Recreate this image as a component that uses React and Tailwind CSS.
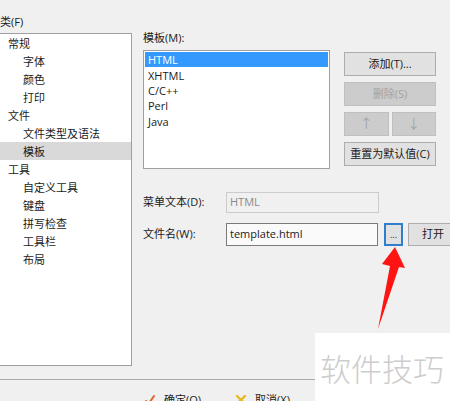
import React from "react";

const tree = [
  { label: "常规", level: 0 },
  { label: "字体", level: 1 },
  { label: "颜色", level: 1 },
  { label: "打印", level: 1 },
  { label: "文件", level: 0 },
  { label: "文件类型及语法", level: 1 },
  { label: "模板", level: 1, selected: true },
  { label: "工具", level: 0 },
  { label: "自定义工具", level: 1 },
  { label: "键盘", level: 1 },
  { label: "拼写检查", level: 1 },
  { label: "工具栏", level: 1 },
  { label: "布局", level: 1 },
];

const templates = ["HTML", "XHTML", "C/C++", "Perl", "Java"];

function Btn({ children, disabled, className = "" }) {
  return (
    <div
      className={
        "flex items-center justify-center border " +
        (disabled
          ? "bg-[#cccccc] border-[#bfbfbf] text-[#a3a3a3] "
          : "bg-[#e1e1e1] border-[#adadad] text-[#1a1a1a] ") +
        className
      }
    >
      {children}
    </div>
  );
}

export default function App() {
  return (
    <div className="relative w-[450px] h-[401px] overflow-hidden bg-[#f0f0f0] text-[11px] text-[#1a1a1a] font-['Open_Sans','Noto_Sans_CJK_SC',sans-serif]">
      {/* category caption */}
      <div className="h-[33px] pt-[14px] leading-[16px]">类(F)</div>

      <div className="flex h-[333px]">
        {/* category tree */}
        <div className="w-[132px] shrink-0 h-full bg-white border border-l-0 border-[#a0a0a0]">
          {tree.map((t) => (
            <div
              key={t.label}
              className={
                "h-[18px] flex items-center leading-none " +
                (t.level ? "pl-[23px] " : "pl-[8px] ") +
                (t.selected ? "bg-[#d9d9d9]" : "")
              }
            >
              {t.label}
            </div>
          ))}
        </div>

        {/* template settings */}
        <div className="ml-[11px] flex-1 min-w-0 flex flex-col">
          <div className="h-[17px] leading-[10px]">模板(M):</div>
          <div className="flex">
            <div className="w-[187px] shrink-0 h-[119px] bg-white border border-[#a0a0a0] p-px">
              {templates.map((t, i) => (
                <div
                  key={t}
                  className={
                    "h-[15.4px] flex items-center pl-[3px] leading-none " +
                    (i === 0 ? "bg-[#3399ff] text-white" : "")
                  }
                >
                  {t}
                </div>
              ))}
            </div>
            <div className="ml-[14px] mt-[2px] w-[92px] shrink-0 flex flex-col gap-[6px]">
              <Btn className="h-[24px]">添加(T)...</Btn>
              <Btn disabled className="h-[24px]">删除(S)</Btn>
              <div className="flex gap-[3px] h-[24px]">
                <Btn disabled className="flex-1 text-[13px]">↑</Btn>
                <Btn disabled className="flex-1 text-[13px]">↓</Btn>
              </div>
              <Btn className="h-[24px]">重置为默认值(C)</Btn>
            </div>
          </div>

          <div className="flex items-center mt-[23px]">
            <div className="w-[83px] shrink-0">菜单文本(D):</div>
            <div className="w-[153px] shrink-0 h-[21px] flex items-center pl-[3px] border border-[#cccccc] text-[#8a8a8a]">
              HTML
            </div>
          </div>

          <div className="flex items-center mt-[10px]">
            <div className="w-[83px] shrink-0">文件名(W):</div>
            <div className="w-[152px] shrink-0 h-[23px] flex items-center pl-[3px] bg-[#fafafa] border border-[#7a7a7a]">
              template.html
            </div>
            <div className="ml-[6px] w-[19px] shrink-0 h-[23px] flex items-center justify-center bg-[#e1e1e1] border-2 border-[#2f7fcf] text-[9px] leading-none">
              ...
            </div>
            <Btn className="ml-[5px] w-[50px] h-[23px] shrink-0">打开</Btn>
          </div>
        </div>
      </div>

      {/* dialog separator */}
      <div className="mt-[13px] h-px bg-[#acacac]" />

      {/* dialog buttons */}
      <div className="flex items-center mt-[12px] leading-[16px]">
        <svg className="ml-[144px]" width="12" height="12" viewBox="0 0 12 12">
          <path d="M2 7 L4.5 10 L10 2" fill="none" stroke="#e0662a" strokeWidth="2" strokeLinecap="round" />
        </svg>
        <span className="ml-[8px]">确定(O)</span>
        <svg className="ml-[34px]" width="12" height="12" viewBox="0 0 12 12">
          <path d="M2 2 L10 10 M10 2 L2 10" fill="none" stroke="#e8b923" strokeWidth="2.4" strokeLinecap="round" />
        </svg>
        <span className="ml-[8px]">取消(X)</span>
      </div>

      {/* pointer arrow */}
      <svg className="absolute left-0 top-0" width="450" height="401" viewBox="0 0 450 401">
        <polygon points="395,247 405,268 399,267 378,329 390,266 382,264" fill="#ff1414" />
      </svg>

      {/* watermark */}
      <div className="absolute left-[315px] top-[333px] w-[135px] h-[68px] bg-white flex items-center pl-[5px]">
        <span className="text-[31px] leading-none text-[#cdcdcd] font-['Noto_Sans_CJK_SC',sans-serif] font-light">
          软件技巧
        </span>
      </div>
    </div>
  );
}
